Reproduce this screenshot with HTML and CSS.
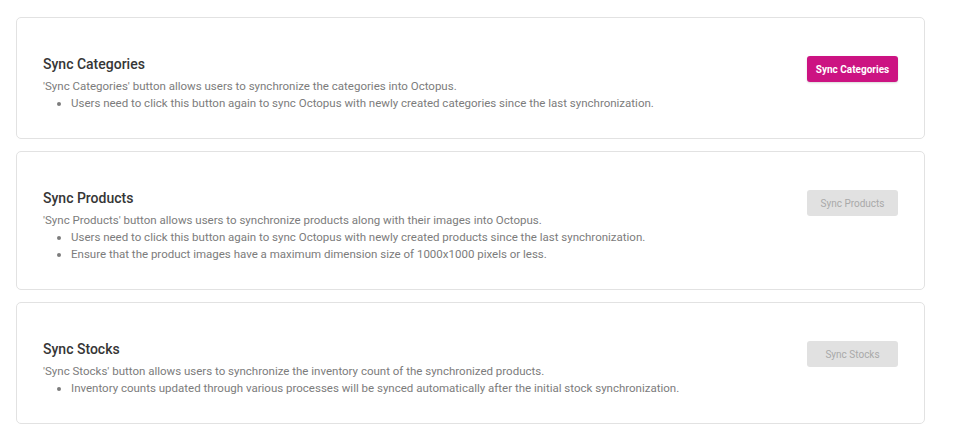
FILE: index.html
```html
<!DOCTYPE html>
<html lang="en">
<head>
<meta charset="utf-8">
<title>Sync</title>
<link rel="stylesheet" href="styles.css">
</head>
<body>
<main class="page">
  <section class="card">
    <div class="card-body">
      <h2 class="card-title">Sync Categories</h2>
      <p class="card-desc">'Sync Categories' button allows users to synchronize the categories into Octopus.</p>
      <ul class="card-list">
        <li>Users need to click this button again to sync Octopus with newly created categories since the last synchronization.</li>
      </ul>
    </div>
    <button class="btn btn-primary" type="button">Sync Categories</button>
  </section>
  <section class="card">
    <div class="card-body">
      <h2 class="card-title">Sync Products</h2>
      <p class="card-desc">'Sync Products' button allows users to synchronize products along with their images into Octopus.</p>
      <ul class="card-list">
        <li>Users need to click this button again to sync Octopus with newly created products since the last synchronization.</li>
        <li>Ensure that the product images have a maximum dimension size of 1000x1000 pixels or less.</li>
      </ul>
    </div>
    <button class="btn btn-disabled" type="button" disabled>Sync Products</button>
  </section>
  <section class="card">
    <div class="card-body">
      <h2 class="card-title">Sync Stocks</h2>
      <p class="card-desc">'Sync Stocks' button allows users to synchronize the inventory count of the synchronized products.</p>
      <ul class="card-list">
        <li>Inventory counts updated through various processes will be synced automatically after the initial stock synchronization.</li>
      </ul>
    </div>
    <button class="btn btn-disabled" type="button" disabled>Sync Stocks</button>
  </section>
</main>
</body>
</html>
```

FILE: styles.css
```css
html, body {
  margin: 0;
  padding: 0;
  background: #ffffff;
}

body {
  font-family: Roboto, "Liberation Sans", Arial, sans-serif;
}

.page {
  display: flex;
  flex-direction: column;
  gap: 12px;
  padding: 17px 50px 0 16px;
}

.card {
  display: flex;
  justify-content: space-between;
  align-items: flex-start;
  border: 1px solid #e2e2e2;
  border-radius: 5px;
  padding: 38px 26px 26px 26px;
  background: #fff;
}

.card-body {
  min-width: 0;
}

.card-title {
  margin: 0 0 6px 0;
  font-size: 14px;
  line-height: 16px;
  font-weight: 500;
  color: #363636;
}

.card-desc {
  margin: 0;
  font-size: 11.5px;
  line-height: 17px;
  color: #7c7c7c;
}

.card-list {
  margin: 0;
  padding: 0 0 0 28px;
  font-size: 11.5px;
  line-height: 17px;
  color: #7c7c7c;
}

.btn {
  flex: none;
  width: 91px;
  height: 26px;
  border: none;
  border-radius: 3px;
  font-family: Roboto, "Liberation Sans", Arial, sans-serif;
  font-size: 10px;
  padding: 0;
  text-align: center;
}

.btn-primary {
  background: #cc1382;
  color: #ffffff;
  font-weight: 700;
  box-shadow: 0 1px 2px rgba(0, 0, 0, 0.15);
}

.btn-disabled {
  background: #e1e1e1;
  color: #a9a9a9;
  font-weight: 400;
}
```
